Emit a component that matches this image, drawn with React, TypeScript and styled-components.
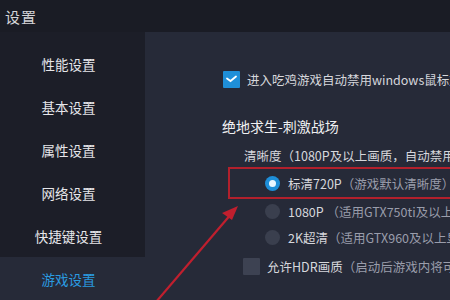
import React from "react";
import styled, { createGlobalStyle } from "styled-components";

const Global = createGlobalStyle`
  html, body { margin: 0; padding: 0; background: #1a1c25; }
  body { font-family: "Noto Sans CJK SC", "Noto Sans", sans-serif; width: 450px; height: 300px; overflow: hidden; }
`;

const Frame = styled.div`
  width: 450px;
  height: 300px;
  display: flex;
  flex-direction: column;
  background: #1a1c25;
  position: relative;
  overflow: hidden;
`;

const TitleBar = styled.div`
  height: 32px;
  flex: none;
  display: flex;
  align-items: center;
  padding-left: 5px;
  color: #d4d4d8;
  font-size: 15px;
  letter-spacing: 1px;
  background: #1a1c25;
`;

const Body = styled.div`
  flex: 1;
  display: flex;
  min-height: 0;
`;

const Sidebar = styled.div`
  width: 145px;
  flex: none;
  display: flex;
  flex-direction: column;
  padding-top: 10px;
  background: #1c1e28;
`;

const NavItem = styled.div<{ $active?: boolean }>`
  height: 43px;
  flex: none;
  display: flex;
  align-items: center;
  justify-content: center;
  padding-right: 8px;
  font-size: 13.5px;
  color: ${(p) => (p.$active ? "#2a9be0" : "#e6e6ea")};
  background: ${(p) => (p.$active ? "#262a38" : "transparent")};
`;

const Main = styled.div`
  flex: 1;
  min-width: 0;
  background: #262a38;
  padding: 38px 0 0 77px;
  display: flex;
  flex-direction: column;
  white-space: nowrap;
  overflow: hidden;
  color: #d6d7dc;
  font-size: 12.5px;
`;

const Row = styled.div<{ $indent?: number; $mt?: number }>`
  display: flex;
  align-items: center;
  gap: 7px;
  margin-left: ${(p) => p.$indent ?? 0}px;
  margin-top: ${(p) => p.$mt ?? 0}px;
  height: 18px;
  flex: none;
`;

const CheckBox = styled.span<{ $checked?: boolean }>`
  width: 17px;
  height: 17px;
  flex: none;
  border-radius: 1px;
  background: ${(p) => (p.$checked ? "#1f8fd8" : "#3d4252")};
  display: inline-flex;
  align-items: center;
  justify-content: center;
`;

const Radio = styled.span<{ $checked?: boolean }>`
  width: 15px;
  height: 15px;
  flex: none;
  border-radius: 50%;
  background: ${(p) => (p.$checked ? "#1e8ed8" : "#3a3f4e")};
  display: inline-flex;
  align-items: center;
  justify-content: center;
  &::after {
    content: "";
    display: ${(p) => (p.$checked ? "block" : "none")};
    width: 7px;
    height: 7px;
    border-radius: 50%;
    background: #e9f6ff;
  }
`;

const Heading = styled.div`
  font-size: 14px;
  color: #f0f0f2;
  margin-top: 29px;
  height: 18px;
  flex: none;
  display: flex;
  align-items: center;
`;

const Note = styled.span`
  color: #9a9dab;
`;

const Highlight = styled.div`
  margin-top: 3px;
  margin-left: 6px;
  height: 32px;
  flex: none;
  border: 2px solid #b2202c;
  border-right: none;
  display: flex;
  align-items: center;
  padding-left: 35px;
  box-sizing: border-box;
`;

const RadioRow = styled.div<{ $mt?: number }>`
  display: flex;
  align-items: center;
  gap: 8px;
  margin-left: 43px;
  margin-top: ${(p) => p.$mt ?? 0}px;
  height: 18px;
  flex: none;
`;

const Inline = styled.div`
  display: flex;
  align-items: center;
  gap: 8px;
`;

const Arrow = styled.svg`
  position: absolute;
  left: 0;
  top: 0;
  pointer-events: none;
`;

export default function App() {
  return (
    <Frame>
      <Global />
      <TitleBar>设置</TitleBar>
      <Body>
        <Sidebar>
          <NavItem>性能设置</NavItem>
          <NavItem>基本设置</NavItem>
          <NavItem>属性设置</NavItem>
          <NavItem>网络设置</NavItem>
          <NavItem>快捷键设置</NavItem>
          <NavItem $active>游戏设置</NavItem>
        </Sidebar>
        <Main>
          <Row $indent={1}>
            <CheckBox $checked>
              <svg width="11" height="8" viewBox="0 0 11 8">
                <path d="M1 3.5 L4.5 6 L10 1.5" stroke="#fff" strokeWidth="1.8" fill="none" strokeLinecap="round" />
              </svg>
            </CheckBox>
            <span>进入吃鸡游戏自动禁用windows鼠标加速</span>
          </Row>
          <Heading>绝地求生-刺激战场</Heading>
          <Row $indent={22} $mt={11}>
            <span>清晰度（1080P及以上画质，自动禁用抗锯齿）</span>
          </Row>
          <Highlight>
            <Inline>
              <Radio $checked />
              <span>
                标清720P<Note>（游戏默认清晰度）</Note>
              </span>
            </Inline>
          </Highlight>
          <RadioRow $mt={3}>
            <Radio />
            <span>
              1080P <Note>（适用GTX750ti及以上显卡）</Note>
            </span>
          </RadioRow>
          <RadioRow $mt={8}>
            <Radio />
            <span>
              2K超清<Note>（适用GTX960及以上显卡）</Note>
            </span>
          </RadioRow>
          <Row $indent={21} $mt={11}>
            <CheckBox />
            <span>
              允许HDR画质<Note>（启动后游戏内将可选择HDR）</Note>
            </span>
          </Row>
        </Main>
      </Body>
      <Arrow width="450" height="300" viewBox="0 0 450 300">
        <line x1="156" y1="302" x2="232" y2="213" stroke="#c01f2e" strokeWidth="2.2" />
        <path d="M238 206 L222 213 L232 220 Z" fill="#c01f2e" />
      </Arrow>
    </Frame>
  );
}
